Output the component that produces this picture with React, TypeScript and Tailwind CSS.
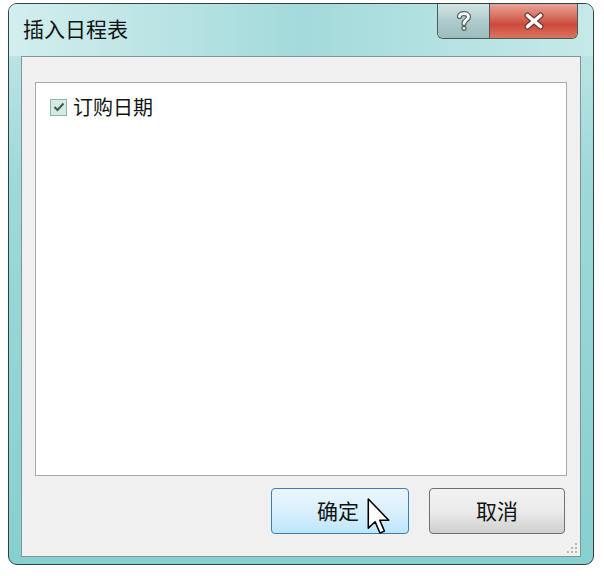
import React from "react";

const cjk = { fontFamily: '"Noto Sans CJK SC", "Noto Sans", sans-serif' };

function HelpGlyph() {
  return (
    <svg width="16" height="22" viewBox="0 0 16 22">
      <path
        d="M3.5 6.5 C3.5 2.5 12.5 2.5 12.5 6.8 C12.5 10 8 10 8 13.5"
        fill="none"
        stroke="#4f5f61"
        strokeWidth="5.2"
        strokeLinecap="round"
      />
      <path
        d="M3.5 6.5 C3.5 2.5 12.5 2.5 12.5 6.8 C12.5 10 8 10 8 13.5"
        fill="none"
        stroke="#ffffff"
        strokeWidth="2.8"
        strokeLinecap="round"
      />
      <circle cx="8" cy="18.3" r="2.6" fill="#4f5f61" />
      <circle cx="8" cy="18.3" r="1.4" fill="#ffffff" />
    </svg>
  );
}

function CloseGlyph() {
  return (
    <svg width="22" height="18" viewBox="0 0 22 18">
      <path d="M4.5 3.5 L17.5 14.5 M17.5 3.5 L4.5 14.5" stroke="#6b3a33" strokeWidth="6" strokeLinecap="round" />
      <path d="M4.5 3.5 L17.5 14.5 M17.5 3.5 L4.5 14.5" stroke="#ffffff" strokeWidth="3.6" strokeLinecap="round" />
    </svg>
  );
}

function Cursor() {
  return (
    <svg width="24" height="37" viewBox="0 0 12 19" className="absolute left-[95px] top-[9px]">
      <path
        d="M0.5 0.5 L0.5 15.5 L4 12.2 L6.5 18 L8.8 17 L6.4 11.4 L11 11.4 Z"
        fill="#ffffff"
        stroke="#000000"
        strokeWidth="0.8"
        strokeLinejoin="round"
      />
    </svg>
  );
}

export default function App() {
  return (
    <div className="w-[604px] h-[576px] bg-white pt-[3px] pl-[8px]" style={cjk}>
      <div className="w-[586px] h-[562px] rounded-[9px] border border-[#33403f] bg-gradient-to-b from-[#c6e8e8] via-[#9fd9d9] via-30% to-[#86d0cf] flex flex-col overflow-hidden">
        {/* title bar */}
        <div className="h-[52px] flex items-start bg-gradient-to-r from-[#d3eeee] via-[#a3dadb] to-[#c6e9e9]">
          <div className="pl-[14px] pt-[10px] text-[21px] leading-[28px] text-[#111414]">插入日程表</div>
          <div className="ml-auto mr-[15px] flex h-[35px] rounded-b-[6px] border border-t-0 border-[#4d5a5c] overflow-hidden">
            <div className="w-[52px] flex items-center justify-center bg-gradient-to-b from-[#d2e4e5] via-[#afcbcd] to-[#9bbcbe] border-r border-[#4d5a5c]">
              <HelpGlyph />
            </div>
            <div className="w-[87px] flex items-center justify-center bg-gradient-to-b from-[#e6a398] via-[#cd4a3b] via-60% to-[#d9735f]">
              <CloseGlyph />
            </div>
          </div>
        </div>

        {/* content */}
        <div className="mx-[12px] h-[501px] border border-[#7f9597] bg-[#f0f0f0] flex flex-col">
          <div className="mt-[25px] mx-[13px] h-[394px] border border-[#a9a9a9] bg-white pt-[11px] pl-[14px]">
            <div className="flex items-center gap-[6px]">
              <div className="w-[17px] h-[17px] border border-[#8fb3a6] bg-[#d3ebe1] flex items-center justify-center">
                <svg width="12" height="10" viewBox="0 0 12 10">
                  <path d="M1.5 5 L4.5 8 L10.5 1.5" fill="none" stroke="#3d5a52" strokeWidth="2" />
                </svg>
              </div>
              <span className="text-[20px] leading-[26px] text-[#111414]">订购日期</span>
            </div>
          </div>

          <div className="flex justify-end gap-[20px] mt-[12px] mr-[15px]">
            <div className="relative w-[138px] h-[46px] rounded-[4px] border border-[#3c7fb1] bg-gradient-to-b from-[#eaf6fd] via-[#d9f0fc] via-50% to-[#bee6fd] flex items-center justify-center pr-[4px] text-[21px] text-[#111414]">
              确定
              <Cursor />
            </div>
            <div className="w-[136px] h-[46px] rounded-[4px] border border-[#707070] bg-gradient-to-b from-[#f2f2f2] via-[#ebebeb] via-50% to-[#cfcfcf] flex items-center justify-center text-[21px] text-[#111414]">
              取消
            </div>
          </div>

          <div className="mt-auto mb-[3px] mr-[3px] self-end grid grid-cols-3 gap-[2px]">
            <div className="w-[2px] h-[2px]" />
            <div className="w-[2px] h-[2px]" />
            <div className="w-[2px] h-[2px] bg-[#b8b8b8]" />
            <div className="w-[2px] h-[2px]" />
            <div className="w-[2px] h-[2px] bg-[#b8b8b8]" />
            <div className="w-[2px] h-[2px] bg-[#b8b8b8]" />
            <div className="w-[2px] h-[2px] bg-[#b8b8b8]" />
            <div className="w-[2px] h-[2px] bg-[#b8b8b8]" />
            <div className="w-[2px] h-[2px] bg-[#b8b8b8]" />
          </div>
        </div>
      </div>
    </div>
  );
}
